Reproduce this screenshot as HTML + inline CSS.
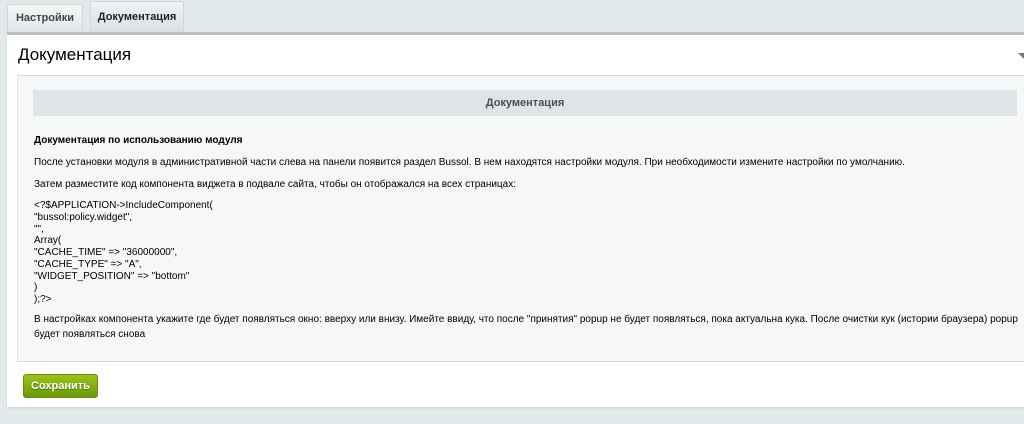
<!DOCTYPE html>
<html><head><meta charset="utf-8"><style>
*{margin:0;padding:0;box-sizing:border-box}
body{width:1024px;height:424px;background:#e2e9eb;font-family:"Liberation Sans",Arial,sans-serif;position:relative;overflow:hidden;color:#000}
.tab{position:absolute;top:4px;height:29px;border:1px solid #cfd7da;border-bottom:none;border-radius:3px 3px 0 0;font-size:11px;font-weight:bold;line-height:26px;text-align:center}
.t1{left:7px;width:76px;background:linear-gradient(#f5f7f7,#dfe5e7);color:#444}
.t2{left:90px;width:94px;background:linear-gradient(#eef2f3,#d9e1e3);color:#222;top:1px;height:32px;line-height:30px}
.panel{position:absolute;left:7px;top:32px;width:1030px;height:375px;background:#fff;border-top:3px solid #b9c3c6;box-shadow:0 1px 2px #c7d0d3}
h1{position:absolute;left:11px;top:10px;font-size:17px;font-weight:normal;color:#000}
.arrow{position:absolute;left:1011px;top:18px;width:0;height:0;border-left:6px solid transparent;border-right:6px solid transparent;border-top:6px solid #777}
.box{position:absolute;left:10px;top:40px;width:1020px;height:287px;background:#f5f7f8;border-top:1px solid #d5dadc;border-bottom:1px solid #d5dadc;border-left:1px solid #e3e7e8}
.hdr{position:absolute;left:15px;top:14px;width:984px;height:26px;background:#dfe5e7;font-size:11px;font-weight:bold;color:#4b4f50;text-align:center;line-height:26px}
.txt{position:absolute;left:16px;top:58px;width:990px;font-size:10px;line-height:13px;color:#000}
.txt p{margin-bottom:9px}
.code{line-height:11.75px;margin-bottom:6px}
.txt p.last{line-height:15px}
.btn{position:absolute;left:16px;top:339px;width:75px;height:24px;border-radius:3px;background:linear-gradient(#9cc21b,#6b9a05);border:1px solid #6a8e10;color:#fff;font-size:11px;font-weight:bold;text-align:center;line-height:22px;text-shadow:0 1px 1px #4a6a00}
</style></head><body>
<div class="tab t1">Настройки</div>
<div class="tab t2">Документация</div>
<div class="panel">
<h1>Документация</h1>
<div class="arrow"></div>
<div class="box">
<div class="hdr">Документация</div>
<div class="txt">
<p><b>Документация по использованию модуля</b></p>
<p>После установки модуля в административной части слева на панели появится раздел Bussol. В нем находятся настройки модуля. При необходимости измените настройки по умолчанию.</p>
<p>Затем разместите код компонента виджета в подвале сайта, чтобы он отображался на всех страницах:</p>
<div class="code">&lt;?$APPLICATION-&gt;IncludeComponent(<br>"bussol:policy.widget",<br>"",<br>Array(<br>"CACHE_TIME" =&gt; "36000000",<br>"CACHE_TYPE" =&gt; "A",<br>"WIDGET_POSITION" =&gt; "bottom"<br>)<br>);?&gt;</div>
<p class="last">В настройках компонента укажите где будет появляться окно: вверху или внизу. Имейте ввиду, что после "принятия" popup не будет появляться, пока актуальна кука. После очистки кук (истории браузера) popup будет появляться снова</p>
</div>
</div>
<div class="btn">Сохранить</div>
</div>
</body></html>
